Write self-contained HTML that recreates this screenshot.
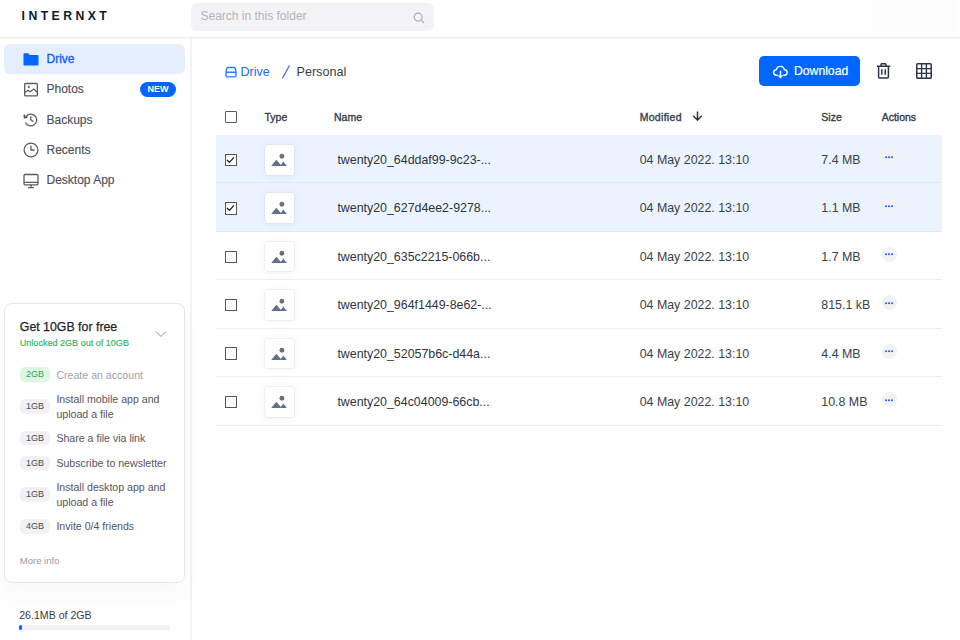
<!DOCTYPE html>
<html><head><meta charset="utf-8">
<style>
*{box-sizing:border-box;margin:0;padding:0}
html,body{width:960px;height:640px;overflow:hidden;background:#fff}
body{font-family:"Liberation Sans",sans-serif;position:relative;color:#3b3b45}
.a{position:absolute;white-space:nowrap}
svg{position:absolute;display:block}
/* header */
#hdr{position:absolute;left:0;top:37px;width:960px;height:1px;background:#eceeef;box-shadow:0 1px 0 #f6f7f7}
#logo{left:21.6px;top:9.6px;font-size:12.2px;font-weight:bold;letter-spacing:3.45px;color:#0b1a33;line-height:12px}
#search{position:absolute;left:191px;top:3px;width:243px;height:28px;border-radius:6px;background:#f3f3f6}
#ph{left:200.5px;top:9px;font-size:12px;color:#b3b3bb;line-height:14px}
#tr{position:absolute;left:872px;top:0;width:84px;height:32px;background:#fcfcfd}
/* sidebar */
#side{position:absolute;left:190px;top:38px;width:2px;height:602px;background:#f3f3f6}
#hl{position:absolute;left:4px;top:44px;width:181px;height:30px;border-radius:6px;background:#e5eefd}
.nav{left:46.5px;font-size:12px;line-height:14px;color:#4f4f58;-webkit-text-stroke:0.15px #4f4f58}
#new{position:absolute;left:140px;top:82px;width:36px;height:15px;border-radius:8px;background:#0066ff;color:#fff;font-size:9px;font-weight:bold;text-align:center;line-height:15px}
#card{position:absolute;left:4px;top:303px;width:181px;height:280px;border:1px solid #e6e6ea;border-radius:8px;background:#fff;box-shadow:0 14px 22px rgba(60,60,90,0.035)}
.badge{position:absolute;left:20px;width:30px;height:14.5px;border-radius:5px;background:#f1f1f5;color:#4a4a52;font-size:9px;text-align:center;line-height:14.5px}
.task{left:56.4px;font-size:10.6px;line-height:15px;color:#55555e}
/* main */
.hd{font-size:10.5px;color:#363c4a;line-height:12px;top:110.8px;-webkit-text-stroke:0.35px #363c4a}
.row{position:absolute;left:216px;width:726px;height:48.45px;border-bottom:1px solid #eceef2}
.sel{background:#ebf3fe;border-bottom-color:#dce8fb}
.cb{position:absolute;left:9px;width:12.4px;height:12.4px;border:1.7px solid #565656;border-radius:0.5px;background:#fff}
.tile{position:absolute;left:48.5px;width:29.5px;height:29.5px;border-radius:2px;background:#fff;box-shadow:0 1px 6px rgba(100,110,150,.10),0 0 0 0.5px rgba(220,224,232,.6)}
.fn{left:121.4px;font-size:12.4px;color:#2f3440;line-height:14px}
.dt{left:423.7px;font-size:12.4px;color:#3a3f4c;line-height:14px}
.sz{left:605.3px;font-size:12.4px;color:#3a3f4c;line-height:14px}
.act{position:absolute;left:665.5px;top:15px;width:15px;height:15px;border-radius:50%;background:#f2f2f5}
.cb{top:18.7px}.tile{top:10px}.fn,.dt,.sz{top:17.8px}
.ck{left:0.2px;top:1.3px}.mt{left:6.5px;top:8px}.dots{left:3.5px;top:6.3px}
</style></head><body>
<div id="hdr"></div>
<div id="logo" class="a">INTERNXT</div>
<div id="search"></div>
<div id="ph" class="a">Search in this folder</div>
<svg style="left:412.6px;top:11.5px" width="12" height="12" viewBox="0 0 12 12"><circle cx="5.1" cy="5.1" r="4" fill="none" stroke="#a8a8b0" stroke-width="1.1"/><path d="M8.3 8.3 L11 11" stroke="#a8a8b0" stroke-width="1.1"/></svg>
<div id="tr"></div>

<div id="side"></div>
<div id="hl"></div>
<svg style="left:23px;top:53px" width="16" height="13" viewBox="0 0 16 13"><path d="M0.5 1.2 Q0.5 0.2 1.5 0.2 H5.2 L6.8 2 H14.5 Q15.5 2 15.5 3 V11.8 Q15.5 12.6 14.5 12.6 H1.5 Q0.5 12.6 0.5 11.8 Z" fill="#0066ff"/></svg>
<div class="a nav" style="top:51.8px;color:#0a5cff;-webkit-text-stroke:0.3px #0a5cff">Drive</div>
<svg style="left:24px;top:82px" width="14" height="15" viewBox="0 0 14 15"><rect x="0.65" y="1.5" width="12.7" height="12.4" rx="1" fill="none" stroke="#5c5c5c" stroke-width="1.3"/><circle cx="4.8" cy="4.9" r="1.05" fill="#5c5c5c"/><path d="M0.9 10.6 L3.9 8.2 L6.2 9.8 L9.8 7 L13.2 10.2" fill="none" stroke="#5c5c5c" stroke-width="1.2"/></svg>
<div class="a nav" style="top:82px">Photos</div>
<div id="new">NEW</div>
<svg style="left:23px;top:112.3px" width="15" height="15" viewBox="0 0 15 15"><path d="M2.9 4.6 A5.9 5.9 0 1 1 2.4 10.4" fill="none" stroke="#5c5c5c" stroke-width="1.3"/><path d="M1.2 2.6 L1.5 5.6 L4.5 5.3" fill="none" stroke="#4a4a4a" stroke-width="1.5" stroke-linejoin="miter"/><path d="M7.7 4.3 V7.6 L10.2 9.6" fill="none" stroke="#5c5c5c" stroke-width="1.3"/></svg>
<div class="a nav" style="top:112.5px">Backups</div>
<svg style="left:23px;top:142px" width="16" height="16" viewBox="0 0 16 16"><circle cx="8" cy="8" r="6.9" fill="none" stroke="#5c5c5c" stroke-width="1.3"/><path d="M8 3.8 V8 H11.6" fill="none" stroke="#5c5c5c" stroke-width="1.3"/></svg>
<div class="a nav" style="top:142.7px">Recents</div>
<svg style="left:23px;top:173px" width="16" height="16" viewBox="0 0 16 16"><rect x="1" y="1.5" width="14" height="10.3" rx="1" fill="none" stroke="#5c5c5c" stroke-width="1.3"/><path d="M1 9.3 H15 M8 11.8 V14.5 M5 14.6 H11" fill="none" stroke="#5c5c5c" stroke-width="1.3"/></svg>
<div class="a nav" style="top:172.5px">Desktop App</div>

<div id="card"></div>
<div class="a" style="left:19.8px;top:321.2px;font-size:12.35px;color:#1f222c;line-height:13px;-webkit-text-stroke:0.25px #1f222c">Get 10GB for free</div>
<div class="a" style="left:19.8px;top:337.6px;font-size:9.05px;color:#32b35a;line-height:10px;-webkit-text-stroke:0.15px #32b35a">Unlocked 2GB out of 10GB</div>
<svg style="left:155px;top:330px" width="12" height="8" viewBox="0 0 12 8"><path d="M1 1.5 L6 6.5 L11 1.5" fill="none" stroke="#96969e" stroke-width="1"/></svg>

<div class="badge" style="top:367.3px;background:#dcf7e3;color:#2fa652">2GB</div>
<div class="a task" style="top:368px;color:#a2a2aa">Create an account</div>
<div class="badge" style="top:399.4px">1GB</div>
<div class="a task" style="top:391.8px;white-space:normal;width:120px">Install mobile app and upload a file</div>
<div class="badge" style="top:430.9px">1GB</div>
<div class="a task" style="top:430.9px">Share a file via link</div>
<div class="badge" style="top:455.6px">1GB</div>
<div class="a task" style="top:455.6px">Subscribe to newsletter</div>
<div class="badge" style="top:487.1px">1GB</div>
<div class="a task" style="top:479.6px;white-space:normal;width:120px">Install desktop app and upload a file</div>
<div class="badge" style="top:519px">4GB</div>
<div class="a task" style="top:519px">Invite 0/4 friends</div>
<div class="a" style="left:19.8px;top:554.5px;font-size:9.5px;color:#9a9aa2;line-height:11px">More info</div>

<div class="a" style="left:19.2px;top:608.8px;font-size:10.6px;color:#3a3a44;line-height:12px">26.1MB of 2GB</div>
<div style="position:absolute;left:19px;top:625.4px;width:151px;height:4.6px;border-radius:3px;background:#f0f0f5"></div>
<div style="position:absolute;left:19px;top:625.4px;width:3px;height:4.6px;border-radius:3px;background:#0066ff"></div>

<!-- breadcrumb -->
<svg style="left:224.8px;top:65.5px" width="12" height="12" viewBox="0 0 12 12"><path d="M3 1.45 H9 Q10 1.45 10.3 2.5 L11 6.2 V9.6 Q11 10.85 9.8 10.85 H2.2 Q1 10.85 1 9.6 V6.2 L1.7 2.5 Q2 1.45 3 1.45 Z M1 6.2 H11" fill="none" stroke="#2b7bff" stroke-width="1.4"/><circle cx="9" cy="8.5" r="0.6" fill="#8ab4ff"/></svg>
<div class="a" style="left:240.4px;top:64.8px;font-size:12.6px;color:#1a6bff;line-height:14px">Drive</div>
<svg style="left:281px;top:65px" width="10" height="14" viewBox="0 0 10 14"><path d="M8.2 1 L1.6 13" stroke="#4a5cff" stroke-width="1.25" stroke-linecap="round"/></svg>
<div class="a" style="left:296.5px;top:64.8px;font-size:12.6px;color:#3a3e4a;line-height:14px">Personal</div>

<div style="position:absolute;left:759px;top:56px;width:101px;height:30px;border-radius:5px;background:#0066ff"></div>
<svg style="left:772.5px;top:65px" width="15" height="14" viewBox="0 0 15 14"><path d="M4.8 10.3 H3.6 A2.8 2.8 0 0 1 3.4 4.7 A4 4 0 0 1 11.3 4.7 A2.8 2.8 0 0 1 11.4 10.3 H10.2" fill="none" stroke="#fff" stroke-width="1.4" stroke-linejoin="round"/><path d="M7.5 5.8 V12.6 M5.5 10.6 L7.5 12.6 L9.5 10.6" fill="none" stroke="#fff" stroke-width="1.4" stroke-linejoin="round"/></svg>
<div class="a" style="left:794px;top:64.2px;font-size:12.2px;color:#fff;line-height:14px;-webkit-text-stroke:0.2px #fff">Download</div>
<svg style="left:876px;top:63px" width="15" height="16" viewBox="0 0 15 16"><path d="M0.8 3.2 H14.2 M5 3.2 V1.6 Q5 0.8 5.8 0.8 H9.2 Q10 0.8 10 1.6 V3.2 M2.6 3.2 V14 Q2.6 15 3.6 15 H11.4 Q12.4 15 12.4 14 V3.2 M5.8 6.2 V11.8 M9.2 6.2 V11.8" fill="none" stroke="#2c3444" stroke-width="1.5"/></svg>
<svg style="left:915.5px;top:63px" width="16" height="16" viewBox="0 0 16 16"><rect x="0.8" y="0.8" width="14.4" height="14.4" rx="0.8" fill="none" stroke="#2c3444" stroke-width="1.5"/><path d="M5.6 0.8 V15.2 M10.4 0.8 V15.2 M0.8 5.6 H15.2 M0.8 10.4 H15.2" stroke="#2c3444" stroke-width="1.4"/></svg>

<!-- table header -->
<div style="position:absolute;left:225px;top:111px;width:12.4px;height:12.4px;border:1.6px solid #5a5a5a;border-radius:1px"></div>
<div class="a hd" style="left:264.5px">Type</div>
<div class="a hd" style="left:334px">Name</div>
<div class="a hd" style="left:639.7px;letter-spacing:0.3px">Modified</div>
<svg style="left:692.3px;top:111px" width="11" height="10" viewBox="0 0 11 10"><path d="M5.5 0.5 V9 M1.2 4.8 L5.5 9.1 L9.8 4.8" fill="none" stroke="#2c3444" stroke-width="1.5"/></svg>
<div class="a hd" style="left:821.3px">Size</div>
<div class="a hd" style="left:881.7px">Actions</div>

<div class="row sel" style="top:135.00px">
<div class="cb"><svg class="ck" width="9" height="8" viewBox="0 0 9 8"><path d="M1 4 L3.4 6.4 L8 1.4" fill="none" stroke="#1c1c30" stroke-width="1.35"/></svg></div>
<div class="tile"><svg class="mt" width="16" height="14" viewBox="0 0 16 14"><circle cx="10.9" cy="3.25" r="2.4" fill="#63708a"/><path d="M0.2 12.95 L5.35 6.85 L9.85 11.9 L12.35 8.55 L15.8 12.95 Z" fill="#63708a"/></svg></div>
<div class="a fn">twenty20_64ddaf99-9c23-...</div>
<div class="a dt">04 May 2022. 13:10</div>
<div class="a sz">7.4 MB</div>
<div class="act"><svg class="dots" width="8" height="3" viewBox="0 0 8 3"><circle cx="1" cy="1.2" r="1" fill="#0a5cff"/><circle cx="4" cy="1.2" r="1" fill="#0a5cff"/><circle cx="7" cy="1.2" r="1" fill="#0a5cff"/></svg></div>
</div>
<div class="row sel" style="top:183.45px">
<div class="cb"><svg class="ck" width="9" height="8" viewBox="0 0 9 8"><path d="M1 4 L3.4 6.4 L8 1.4" fill="none" stroke="#1c1c30" stroke-width="1.35"/></svg></div>
<div class="tile"><svg class="mt" width="16" height="14" viewBox="0 0 16 14"><circle cx="10.9" cy="3.25" r="2.4" fill="#63708a"/><path d="M0.2 12.95 L5.35 6.85 L9.85 11.9 L12.35 8.55 L15.8 12.95 Z" fill="#63708a"/></svg></div>
<div class="a fn">twenty20_627d4ee2-9278...</div>
<div class="a dt">04 May 2022. 13:10</div>
<div class="a sz">1.1 MB</div>
<div class="act"><svg class="dots" width="8" height="3" viewBox="0 0 8 3"><circle cx="1" cy="1.2" r="1" fill="#0a5cff"/><circle cx="4" cy="1.2" r="1" fill="#0a5cff"/><circle cx="7" cy="1.2" r="1" fill="#0a5cff"/></svg></div>
</div>
<div class="row" style="top:231.90px">
<div class="cb"></div>
<div class="tile"><svg class="mt" width="16" height="14" viewBox="0 0 16 14"><circle cx="10.9" cy="3.25" r="2.4" fill="#63708a"/><path d="M0.2 12.95 L5.35 6.85 L9.85 11.9 L12.35 8.55 L15.8 12.95 Z" fill="#63708a"/></svg></div>
<div class="a fn">twenty20_635c2215-066b...</div>
<div class="a dt">04 May 2022. 13:10</div>
<div class="a sz">1.7 MB</div>
<div class="act"><svg class="dots" width="8" height="3" viewBox="0 0 8 3"><circle cx="1" cy="1.2" r="1" fill="#0a5cff"/><circle cx="4" cy="1.2" r="1" fill="#0a5cff"/><circle cx="7" cy="1.2" r="1" fill="#0a5cff"/></svg></div>
</div>
<div class="row" style="top:280.35px">
<div class="cb"></div>
<div class="tile"><svg class="mt" width="16" height="14" viewBox="0 0 16 14"><circle cx="10.9" cy="3.25" r="2.4" fill="#63708a"/><path d="M0.2 12.95 L5.35 6.85 L9.85 11.9 L12.35 8.55 L15.8 12.95 Z" fill="#63708a"/></svg></div>
<div class="a fn">twenty20_964f1449-8e62-...</div>
<div class="a dt">04 May 2022. 13:10</div>
<div class="a sz">815.1 kB</div>
<div class="act"><svg class="dots" width="8" height="3" viewBox="0 0 8 3"><circle cx="1" cy="1.2" r="1" fill="#0a5cff"/><circle cx="4" cy="1.2" r="1" fill="#0a5cff"/><circle cx="7" cy="1.2" r="1" fill="#0a5cff"/></svg></div>
</div>
<div class="row" style="top:328.80px">
<div class="cb"></div>
<div class="tile"><svg class="mt" width="16" height="14" viewBox="0 0 16 14"><circle cx="10.9" cy="3.25" r="2.4" fill="#63708a"/><path d="M0.2 12.95 L5.35 6.85 L9.85 11.9 L12.35 8.55 L15.8 12.95 Z" fill="#63708a"/></svg></div>
<div class="a fn">twenty20_52057b6c-d44a...</div>
<div class="a dt">04 May 2022. 13:10</div>
<div class="a sz">4.4 MB</div>
<div class="act"><svg class="dots" width="8" height="3" viewBox="0 0 8 3"><circle cx="1" cy="1.2" r="1" fill="#0a5cff"/><circle cx="4" cy="1.2" r="1" fill="#0a5cff"/><circle cx="7" cy="1.2" r="1" fill="#0a5cff"/></svg></div>
</div>
<div class="row" style="top:377.25px">
<div class="cb"></div>
<div class="tile"><svg class="mt" width="16" height="14" viewBox="0 0 16 14"><circle cx="10.9" cy="3.25" r="2.4" fill="#63708a"/><path d="M0.2 12.95 L5.35 6.85 L9.85 11.9 L12.35 8.55 L15.8 12.95 Z" fill="#63708a"/></svg></div>
<div class="a fn">twenty20_64c04009-66cb...</div>
<div class="a dt">04 May 2022. 13:10</div>
<div class="a sz">10.8 MB</div>
<div class="act"><svg class="dots" width="8" height="3" viewBox="0 0 8 3"><circle cx="1" cy="1.2" r="1" fill="#0a5cff"/><circle cx="4" cy="1.2" r="1" fill="#0a5cff"/><circle cx="7" cy="1.2" r="1" fill="#0a5cff"/></svg></div>
</div>

</body></html>
